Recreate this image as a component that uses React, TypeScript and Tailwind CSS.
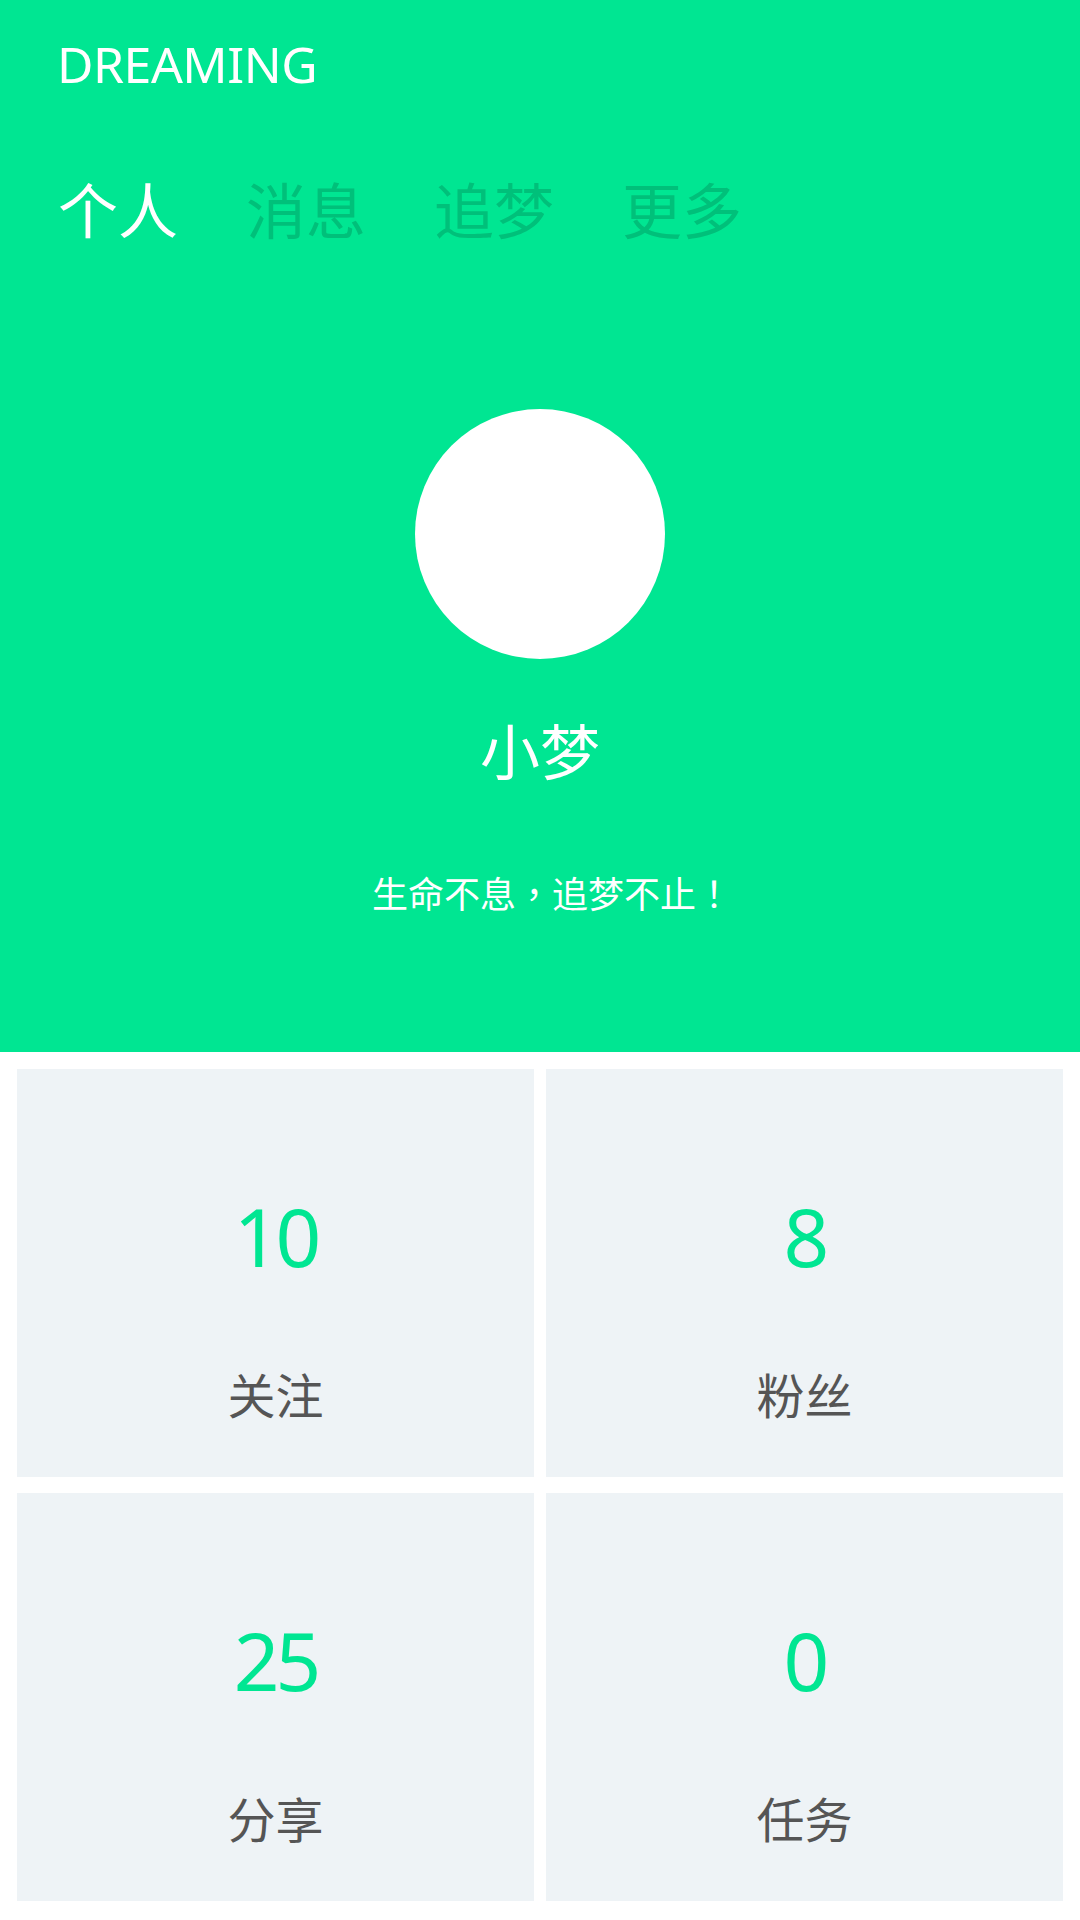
const stats = [
  { value: "10", label: "关注" },
  { value: "8", label: "粉丝" },
  { value: "25", label: "分享" },
  { value: "0", label: "任务" },
];

const tabs = ["个人", "消息", "追梦", "更多"];

// full-width punctuation centred in its cell, as in the design
const Punct = ({ c }: { c: string }) => (
  <span className="font-['Noto_Sans_CJK_TC',sans-serif]">{c}</span>
);

export default function App() {
  return (
    <div className="w-[1080px] min-h-[1920px] bg-white">
      {/* header */}
      <section className="bg-[#00e692] pt-[34px] pb-[142px]">
        <div className="pl-[57px] font-['Noto_Sans',sans-serif] text-[50px] leading-[60px] tracking-[-0.5px] text-white">
          DREAMING
        </div>

        <nav className="mt-[84px] pl-[58px] flex gap-[68px] font-['Noto_Sans_CJK_SC',sans-serif] text-[60px] leading-[60px]">
          {tabs.map((t, i) => (
            <span key={t} className={i === 0 ? "text-white" : "text-[#00c07a]"}>
              {t}
            </span>
          ))}
        </nav>

        <div className="mt-[171px] flex flex-col items-center font-['Noto_Sans_CJK_SC',sans-serif] text-white">
          <div className="w-[250px] h-[250px] rounded-full bg-white" />
          <div className="mt-[60px] text-[60px] leading-[60px]">小梦</div>
          <div className="mt-[95px] pl-[24px] text-[36px] leading-[36px]">
            生命不息<Punct c="，" />追梦不止<Punct c="！" />
          </div>
        </div>
      </section>

      {/* stats */}
      <section className="grid grid-cols-2 gap-x-[12px] gap-y-[16px] px-[17px] pt-[17px] pb-[18px]">
        {stats.map((s) => (
          <div key={s.label} className="h-[408px] bg-[#eef3f6] flex flex-col items-center pt-[127px]">
            <div className="font-['Noto_Sans',sans-serif] text-[80px] leading-[80px] tracking-[-4px] text-[#00e692]">
              {s.value}
            </div>
            <div className="mt-[93px] font-['Noto_Sans_CJK_SC',sans-serif] text-[48px] leading-[48px] text-[#555555]">
              {s.label}
            </div>
          </div>
        ))}
      </section>
    </div>
  );
}
